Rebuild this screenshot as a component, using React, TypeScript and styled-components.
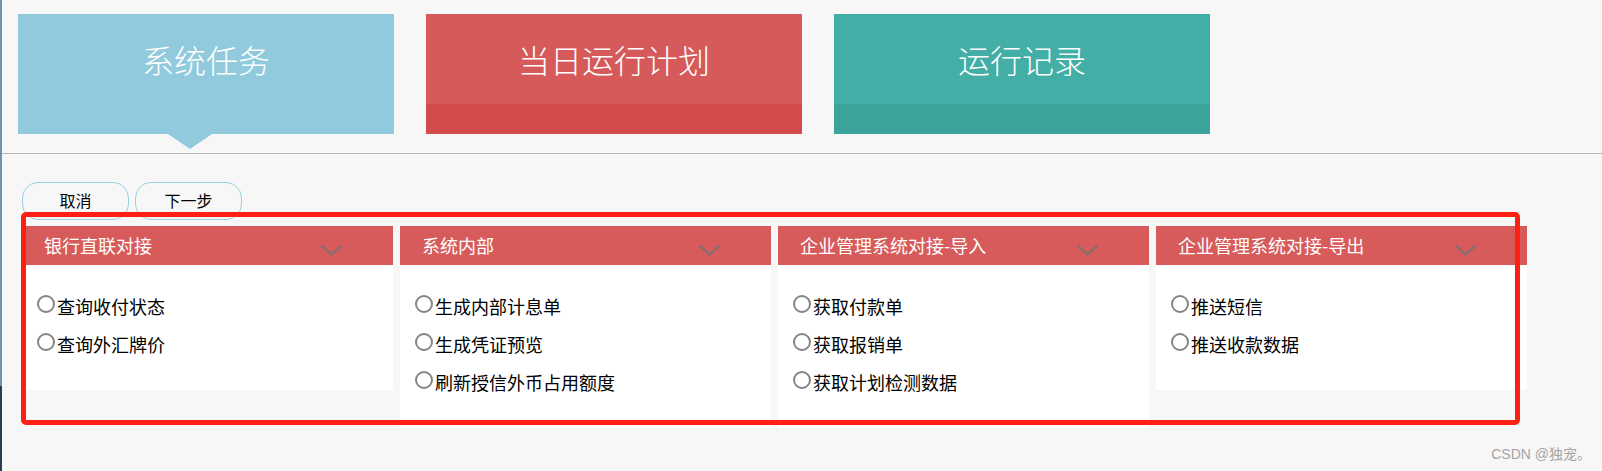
import React from 'react'
import styled, { createGlobalStyle } from 'styled-components'

const GlobalStyle = createGlobalStyle`
    html, body {
        margin: 0;
        padding: 0;
        background: #f7f7f7;
    }
    body {
        font-family: "Noto Sans CJK SC", "Noto Sans", sans-serif;
        color: #000;
    }
    * {
        box-sizing: border-box;
    }
`

const Page = styled.div`
    position: relative;
    min-height: 100vh;
    border-left: 2px solid;
    border-image: linear-gradient(to bottom, #6f93ae 385px, #2c3d4f 385px) 1;
`

const TabBar = styled.div`
    display: flex;
    gap: 32px;
    padding: 14px 0 19px 16px;
    border-bottom: 1px solid #b8b8b8;
`

const Tab = styled.div<{ $color: string; $shade: string; $active?: boolean }>`
    position: relative;
    width: 376px;
    height: 120px;
    background: ${p => p.$active
        ? p.$color
        : `linear-gradient(to bottom, ${p.$color} 90px, ${p.$shade} 90px)`};
    color: #fff;
    font-size: 32px;
    font-weight: 300;
    line-height: 90px;
    text-align: center;
    cursor: pointer;

    ${p => p.$active && `
        &::after {
            content: '';
            position: absolute;
            left: 150px;
            bottom: -15px;
            border-left: 22.5px solid transparent;
            border-right: 22.5px solid transparent;
            border-top: 15px solid ${p.$color};
        }
    `}
`

const Toolbar = styled.div`
    display: flex;
    gap: 6px;
    padding: 28px 0 0 20px;
`

const Button = styled.button`
    width: 107px;
    height: 38px;
    border: 1px solid #9dd0df;
    border-radius: 16px;
    background: transparent;
    font-family: "Noto Sans CJK SC", sans-serif;
    font-size: 16px;
    color: #000;
    padding: 0 0 2px;
    cursor: pointer;
`

const Board = styled.div`
    display: grid;
    grid-template-columns: repeat(4, 371px);
    gap: 7px;
    align-items: start;
    margin-top: 6px;
    padding-left: 20px;
`

const Card = styled.div`
    background: #fff;
`

const CardHeader = styled.div`
    display: flex;
    height: 39px;
    background: #d65b5a;
    color: #fff;
    padding-left: 22px;
`

const CardTitle = styled.span`
    flex: 1;
    font-size: 18px;
    line-height: 39px;
`

const Chevron = styled.svg`
    align-self: flex-start;
    margin: 18px 50px 0 0;
`

const CardBody = styled.div`
    padding: 22px 0 27px 15px;
`

const Option = styled.label`
    display: flex;
    align-items: center;
    height: 38px;
    font-size: 18px;
    cursor: pointer;
`

const Radio = styled.input`
    appearance: none;
    width: 18px;
    height: 18px;
    margin: 0 2px 5px 0;
    border: 2px solid #858585;
    border-radius: 50%;
    background: #fff;
    flex-shrink: 0;
`

const Highlight = styled.div`
    position: absolute;
    left: 19px;
    top: 212px;
    width: 1499px;
    height: 213px;
    border: 5px solid #ff2014;
    border-radius: 5px;
    pointer-events: none;
`

const Watermark = styled.span`
    position: absolute;
    right: 11px;
    bottom: 8px;
    font-family: "Liberation Sans", "Noto Sans CJK SC", sans-serif;
    font-size: 14px;
    color: #a3a3a3;
`

const tabs = [
    { label: '系统任务', color: '#90cadc', shade: '#90cadc', active: true },
    { label: '当日运行计划', color: '#d55a59', shade: '#d34c4c' },
    { label: '运行记录', color: '#42aea5', shade: '#3aa49b' },
]

const groups = [
    { title: '银行直联对接', items: ['查询收付状态', '查询外汇牌价'] },
    { title: '系统内部', items: ['生成内部计息单', '生成凭证预览', '刷新授信外币占用额度'] },
    { title: '企业管理系统对接-导入', items: ['获取付款单', '获取报销单', '获取计划检测数据'] },
    { title: '企业管理系统对接-导出', items: ['推送短信', '推送收款数据'] },
]

export default function App() {
    return (
        <>
            <GlobalStyle />
            <Page>
                <TabBar>
                    {tabs.map(t => (
                        <Tab key={t.label} $color={t.color} $shade={t.shade} $active={t.active}>
                            {t.label}
                        </Tab>
                    ))}
                </TabBar>
                <Toolbar>
                    <Button>取消</Button>
                    <Button>下一步</Button>
                </Toolbar>
                <Board>
                    {groups.map(g => (
                        <Card key={g.title}>
                            <CardHeader>
                                <CardTitle>{g.title}</CardTitle>
                                <Chevron width="23" height="13" viewBox="0 0 23 13">
                                    <path d="M1.5 1.5 L11.5 10.5 L21.5 1.5" fill="none" stroke="#8e6b6b" strokeWidth="2.5" />
                                </Chevron>
                            </CardHeader>
                            <CardBody>
                                {g.items.map(item => (
                                    <Option key={item}>
                                        <Radio type="radio" name="task" />
                                        {item}
                                    </Option>
                                ))}
                            </CardBody>
                        </Card>
                    ))}
                </Board>
                <Highlight />
                <Watermark>CSDN @独宠。</Watermark>
            </Page>
        </>
    )
}
